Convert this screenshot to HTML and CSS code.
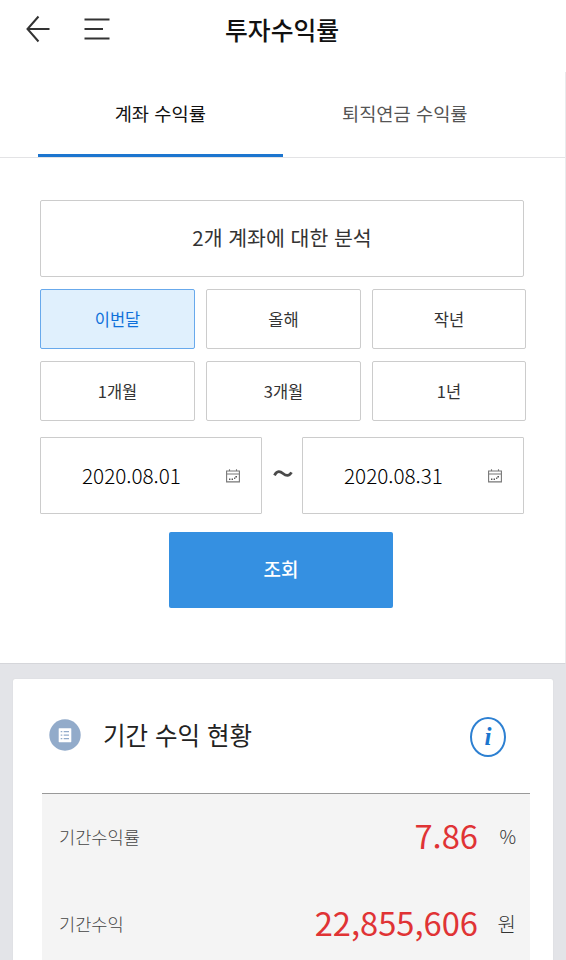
FILE: index.html
```html
<!DOCTYPE html>
<html lang="ko">
<head>
  <meta charset="UTF-8" />
  <meta name="viewport" content="width=device-width, initial-scale=1.0" />
  <title>투자수익률</title>
  <link rel="stylesheet" href="styles.css">
</head>
<body>
  <header class="topbar">
    <svg class="back" width="24" height="28" viewBox="0 0 24 28"><path d="M12.5 1.5L1.5 14L12.5 26.5M1.5 14H23.5" /></svg>
    <svg class="menu" width="26" height="22" viewBox="0 0 26 22"><path d="M0.5 1.5H25.5M0.5 11H19M0.5 20.5H25.5" /></svg>
    <h1>투자수익률</h1>
  </header>

  <main class="search">
    <nav class="tabs">
      <a class="tab active">계좌 수익률</a>
      <a class="tab">퇴직연금 수익률</a>
    </nav>

    <div class="filters">
      <button class="account">2개 계좌에 대한 분석</button>
      <div class="periods">
        <button class="active">이번달</button>
        <button>올해</button>
        <button>작년</button>
        <button>1개월</button>
        <button>3개월</button>
        <button>1년</button>
      </div>
      <div class="dates">
        <div class="date">
          <span>2020.08.01</span>
          <svg width="14" height="14" viewBox="0 0 14 14"><path d="M0.6 2H13.4V12.9H0.6ZM0.6 5H13.4M3.5 0.3V2M10.5 0.3V2" /><path class="dots" d="M3 10.3H4.4M5.6 10.3H7M8.1 9.3H9.3M9.4 7.7H11" /></svg>
        </div>
        <svg class="tilde" width="20" height="10" viewBox="0 0 20 10"><path d="M1.5 6.3C4 1.6 7 2 10 4.5S16 7.6 18.5 3.4" /></svg>
        <div class="date">
          <span>2020.08.31</span>
          <svg width="14" height="14" viewBox="0 0 14 14"><path d="M0.6 2H13.4V12.9H0.6ZM0.6 5H13.4M3.5 0.3V2M10.5 0.3V2" /><path class="dots" d="M3 10.3H4.4M5.6 10.3H7M8.1 9.3H9.3M9.4 7.7H11" /></svg>
        </div>
      </div>
      <button class="submit">조회</button>
    </div>
  </main>

  <section class="card">
    <div class="card-head">
      <svg width="32" height="32" viewBox="0 0 32 32"><circle cx="16" cy="16" r="15.7" fill="#92abca" /><rect x="9.7" y="9.2" width="12.6" height="14" rx="0.6" fill="#fff" /><path d="M11.7 12.7H13.3M14.7 12.7H20M11.7 16.2H13.3M14.7 16.2H20M11.7 19.7H13.3M14.7 19.7H20" stroke="#92abca" stroke-width="1.3" /></svg>
      <h2>기간 수익 현황</h2>
      <span class="info">i</span>
    </div>
    <dl class="result">
      <div class="row">
        <dt>기간수익률</dt>
        <dd>7.86</dd>
        <dd class="unit percent">%</dd>
      </div>
      <div class="row">
        <dt>기간수익</dt>
        <dd>22,855,606</dd>
        <dd class="unit">원</dd>
      </div>
    </dl>
  </section>
</body>
</html>
```

FILE: styles.css
```css
* {
  box-sizing: border-box;
}
body {
  margin: 0;
  height: 960px;
  overflow: hidden;
  font-family: "Noto Sans CJK KR", sans-serif;
  background: #e3e4e8;
  color: #444;
}
button {
  font-family: inherit;
  font-size: 16.5px;
  font-weight: 400;
  padding: 0;
  color: #333;
  background: #fff;
  border: 1px solid #ccc;
  border-radius: 2px;
}
.topbar {
  display: flex;
  align-items: center;
  height: 72px;
  padding: 0 26px 14px;
  background: #fff;
}
.topbar svg {
  fill: none;
  stroke: #333;
  stroke-width: 2;
}
.menu {
  margin-left: 34px;
}
h1 {
  margin: 0 0 0 115px;
  font-size: 24.8px;
  line-height: 36px;
  font-weight: 500;
  color: #111;
}
.search {
  height: 592px;
  background: #fff;
  border-right: 1px solid #eaeaec;
  border-bottom: 1px solid #d5d6da;
}
.tabs {
  display: flex;
  height: 86px;
  padding: 0 38px;
  border-bottom: 1px solid #e3e3e5;
}
.tab {
  width: 245px;
  line-height: 82px;
  text-align: center;
  font-size: 18.7px;
  color: #555;
}
.tab.active {
  color: #111;
  border-bottom: 3px solid #1c75cf;
}
.filters {
  display: flex;
  flex-direction: column;
  padding: 42px 39px 0 40px;
}
.account {
  width: 484px;
  height: 77px;
  padding-bottom: 3px;
  font-size: 20.5px;
}
.periods {
  display: grid;
  grid-template-columns: 155px 155px 154px;
  grid-auto-rows: 60px;
  justify-content: space-between;
  row-gap: 12px;
  width: 486px;
  margin-top: 12px;
}
.periods .active {
  color: #0f70da;
  background: #e0f0fd;
  border-color: #68a9ec;
}
.dates {
  display: flex;
  align-items: center;
  width: 484px;
  margin-top: 16px;
}
.date {
  display: flex;
  align-items: center;
  width: 222px;
  height: 77px;
  padding: 0 21px 0 41px;
  border: 1px solid #ccc;
  border-radius: 1px;
}
.date span {
  flex: 1;
  padding-bottom: 1px;
  font-size: 20.7px;
  font-weight: 300;
  color: #000;
}
.date svg {
  fill: none;
  stroke: #777;
  stroke-width: 1.1;
}
.date .dots {
  stroke: #555;
  stroke-width: 1.4;
}
.tilde {
  margin: -4px 9px 0 11px;
  fill: none;
  stroke: #4a4a4a;
  stroke-width: 2.8;
}
.submit {
  width: 224px;
  height: 76px;
  margin: 18px 0 0 129px;
  padding-bottom: 3px;
  font-size: 19px;
  font-weight: 500;
  color: #fff;
  background: #3590e1;
  border: none;
}
.card {
  width: 540px;
  height: 300px;
  margin: 15px 0 0 13px;
  padding: 0 23px 0 29px;
  background: #fff;
  border-radius: 2px;
  box-shadow: 0 0 1px #c5c6ca;
}
.card-head {
  display: flex;
  align-items: center;
  height: 115px;
  padding: 0 24px 3px 7px;
  border-bottom: 1px solid #999;
}
h2 {
  flex: 1;
  margin: 0 0 0 22px;
  font-size: 24.5px;
  font-weight: 400;
  color: #222;
}
.info {
  width: 36px;
  height: 40px;
  margin-top: 5px;
  border: 2px solid #2d80d2;
  border-radius: 50%;
  font: italic bold 25px/36px "Liberation Serif", serif;
  text-align: center;
  color: #1b76ce;
}
.result {
  margin: 0;
  height: 200px;
  background: #f4f4f4;
}
.row {
  display: flex;
  align-items: center;
  height: 87px;
  padding: 0 14px 3px 17px;
}
dt {
  flex: 1;
  font-size: 17.6px;
  font-weight: 300;
  color: #444;
}
dd {
  margin: 0;
  padding-bottom: 3px;
  font-size: 32.7px;
  color: #e03335;
}
dd.unit {
  width: 38px;
  padding-bottom: 0;
  font-size: 20px;
  font-weight: 300;
  text-align: right;
  color: #333;
}
dd.percent {
  font-size: 18.5px;
}
```
